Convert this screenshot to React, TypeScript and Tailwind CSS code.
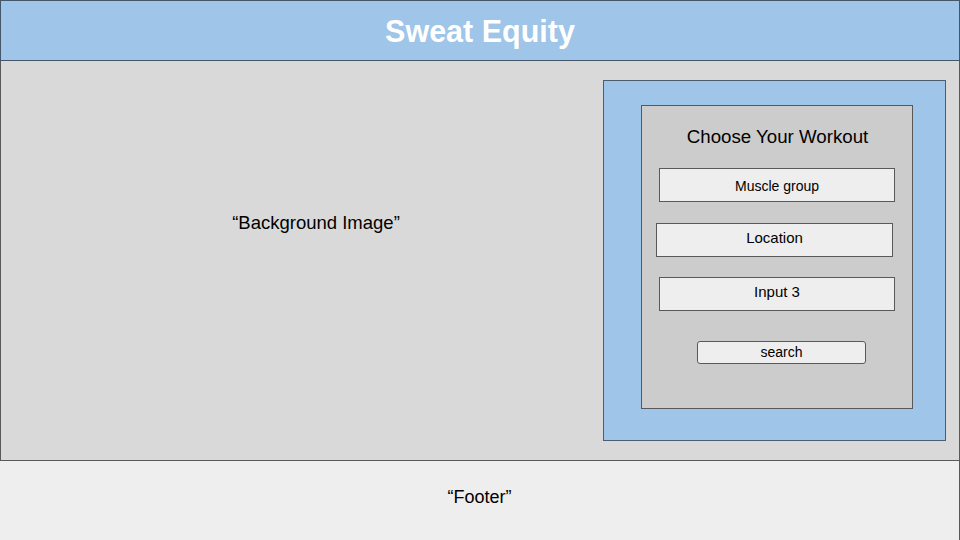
import React from "react";

export default function App() {
  const box =
    "h-[34px] border border-[#595959] bg-[#eeeeee] flex items-center justify-center text-black";
  return (
    <div
      className="w-[960px] h-[540px] flex flex-col overflow-hidden bg-white"
      style={{ fontFamily: '"Liberation Sans", Arial, sans-serif' }}
    >
      <header className="h-[61px] shrink-0 bg-[#9fc5e8] border border-[#45566a] flex items-center justify-center">
        <h1 className="text-[30.5px] font-bold text-white leading-none pt-[2px]">Sweat Equity</h1>
      </header>
      <main className="h-[400px] shrink-0 bg-[#d9d9d9] border border-t-0 border-[#595959] flex pt-[19px]">
        <div className="w-[602px] shrink-0 flex justify-center pl-[28px] pt-[131px]">
          <span className="text-[18.5px] text-black leading-[24px] h-[24px]">“Background Image”</span>
        </div>
        <div className="w-[343px] h-[361px] bg-[#9fc5e8] border border-[#4c5d70] pl-[37px] pt-[24px]">
          <div className="w-[272px] h-[304px] bg-[#cccccc] border border-[#595959] flex flex-col pt-[19px]">
            <div className="text-[18.7px] leading-[24px] h-[24px] text-black text-center pl-[1px]">Choose Your Workout</div>
            <div className={`${box} mt-[19px] ml-[17px] w-[236px] text-[14px] pt-[3px]`}>Muscle group</div>
            <div className={`${box} mt-[21px] ml-[14px] w-[237px] text-[15px] pb-[4px]`}>Location</div>
            <div className={`${box} mt-[20px] ml-[17px] w-[236px] text-[15px] pb-[4px]`}>Input 3</div>
            <div className="mt-[30px] ml-[55px] w-[169px] h-[23px] rounded-[3px] border border-[#595959] bg-[#eeeeee] flex items-center justify-center text-[14px] text-black">
              search
            </div>
          </div>
        </div>
      </main>
      <footer className="flex-1 bg-[#eeeeee] border-r border-[#595959] flex items-center justify-center">
        <span className="text-[18px] text-black pb-[6px]">“Footer”</span>
      </footer>
    </div>
  );
}
